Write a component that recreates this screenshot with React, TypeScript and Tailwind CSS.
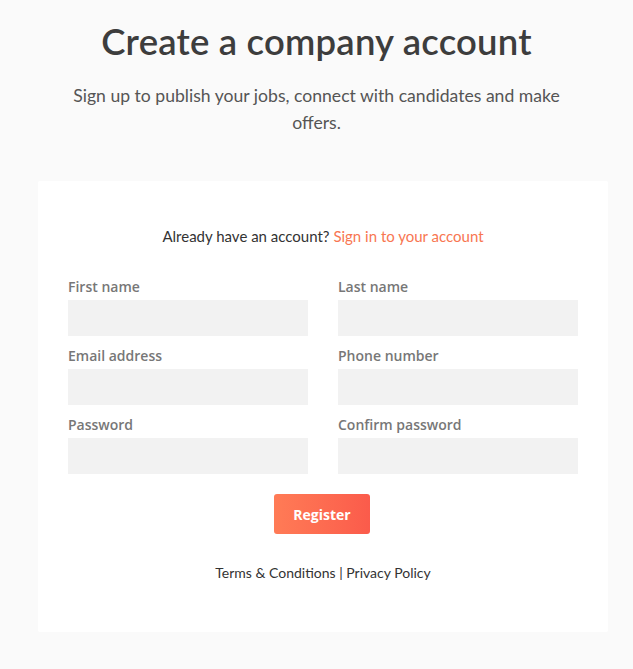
import { FormEvent, useState } from 'react'

const fields = [
  ['First name', 'Last name'],
  ['Email address', 'Phone number'],
  ['Password', 'Confirm password'],
]

export default function App() {
  const [values, setValues] = useState<Record<string, string>>({})

  function handleSubmit(e: FormEvent) {
    e.preventDefault()
  }

  return (
    <div className="min-h-screen bg-[#fafafa] pb-9 font-['Lato',sans-serif]">
      <div className="pt-[19px] text-center">
        <h1 className="text-[36.5px] leading-[44px] font-semibold text-[#3d3d3d] tracking-[0.2px]">
          Create a company account
        </h1>
        <p className="mx-auto mt-[19px] w-[510px] text-[17.6px] leading-[27px] text-[#555]">
          Sign up to publish your jobs, connect with candidates and make offers.
        </p>
      </div>

      <form
        onSubmit={handleSubmit}
        className="ml-[38px] mt-[45px] h-[451px] w-[570px] rounded-[2px] bg-white px-[30px] pt-[45px]"
      >
        <p className="text-center text-[15px] leading-[20px] text-[#333]">
          Already have an account?{' '}
          <a href="#" className="text-[#f87652]">
            Sign in to your account
          </a>
        </p>

        <div className="mt-[28px] flex flex-col gap-[7px]">
          {fields.map((row) => (
            <div key={row[0]} className="grid grid-cols-2 gap-[30px]">
              {row.map((label) => (
                <label key={label} className="block">
                  <span className="mb-[1px] block font-['Open_Sans',sans-serif] text-[14px] font-semibold leading-[25px] text-[#777]">
                    {label}
                  </span>
                  <input
                    type={label.toLowerCase().includes('password') ? 'password' : 'text'}
                    value={values[label] ?? ''}
                    onChange={(e) => setValues({ ...values, [label]: e.target.value })}
                    className="block h-[36px] w-full bg-[#f2f2f2] px-3 text-sm outline-none"
                  />
                </label>
              ))}
            </div>
          ))}
        </div>

        <div className="mt-[20px] flex justify-center">
          <button
            type="submit"
            className="ml-[-2px] h-[40px] w-[96px] rounded-[3px] bg-gradient-to-r from-[#ff7b56] to-[#fb5b4b] font-['Open_Sans',sans-serif] text-[14px] font-bold text-white"
          >
            Register
          </button>
        </div>

        <p className="mt-[29px] text-center text-[14px] leading-[20px] text-[#333]">
          <a href="#">Terms &amp; Conditions</a> | <a href="#">Privacy Policy</a>
        </p>
      </form>
    </div>
  )
}
